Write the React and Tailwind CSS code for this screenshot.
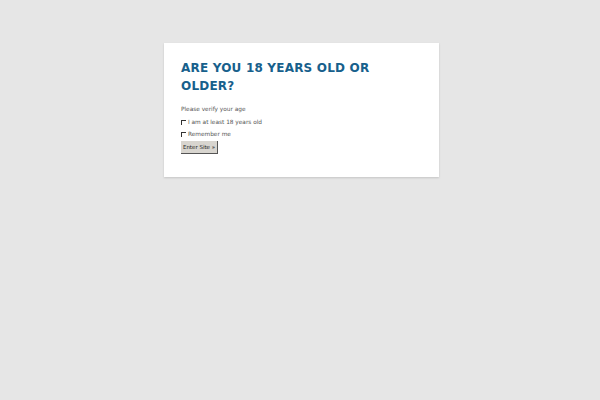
export default function App() {
  return (
    <div className="w-[600px] h-[400px] bg-[#e6e6e6] pt-[43px] font-['DejaVu_Sans',sans-serif]">
      <div className="ml-[164px] w-[275px] h-[134px] bg-white shadow-[0_1px_2px_rgba(0,0,0,0.15)] pt-[16px] px-[17px]">
        <h1 className="text-[12px] leading-[18px] font-bold text-[#17608c] tracking-[0.2px]">
          ARE YOU 18 YEARS OLD OR OLDER?
        </h1>
        <p className="mt-[9px] text-[5.8px] leading-[10px] text-[#555]">Please verify your age</p>
        <label className="mt-[2px] flex items-center gap-[2px] text-[5.8px] leading-[12px] text-[#555]">
          <span className="w-[5px] h-[5px] border-t border-l border-[#333] mt-[1px]" />
          I am at least 18 years old
        </label>
        <label className="flex items-center gap-[2px] text-[5.8px] leading-[12px] text-[#555]">
          <span className="w-[5px] h-[5px] border-t border-l border-[#333] mt-[1px]" />
          Remember me
        </label>
        <button className="block mt-[1px] w-[37px] h-[13px] bg-[#d8d5cf] border-r border-b border-[#555] text-[5.5px] whitespace-nowrap text-[#222] leading-[12px]">
          Enter Site »
        </button>
      </div>
    </div>
  );
}
